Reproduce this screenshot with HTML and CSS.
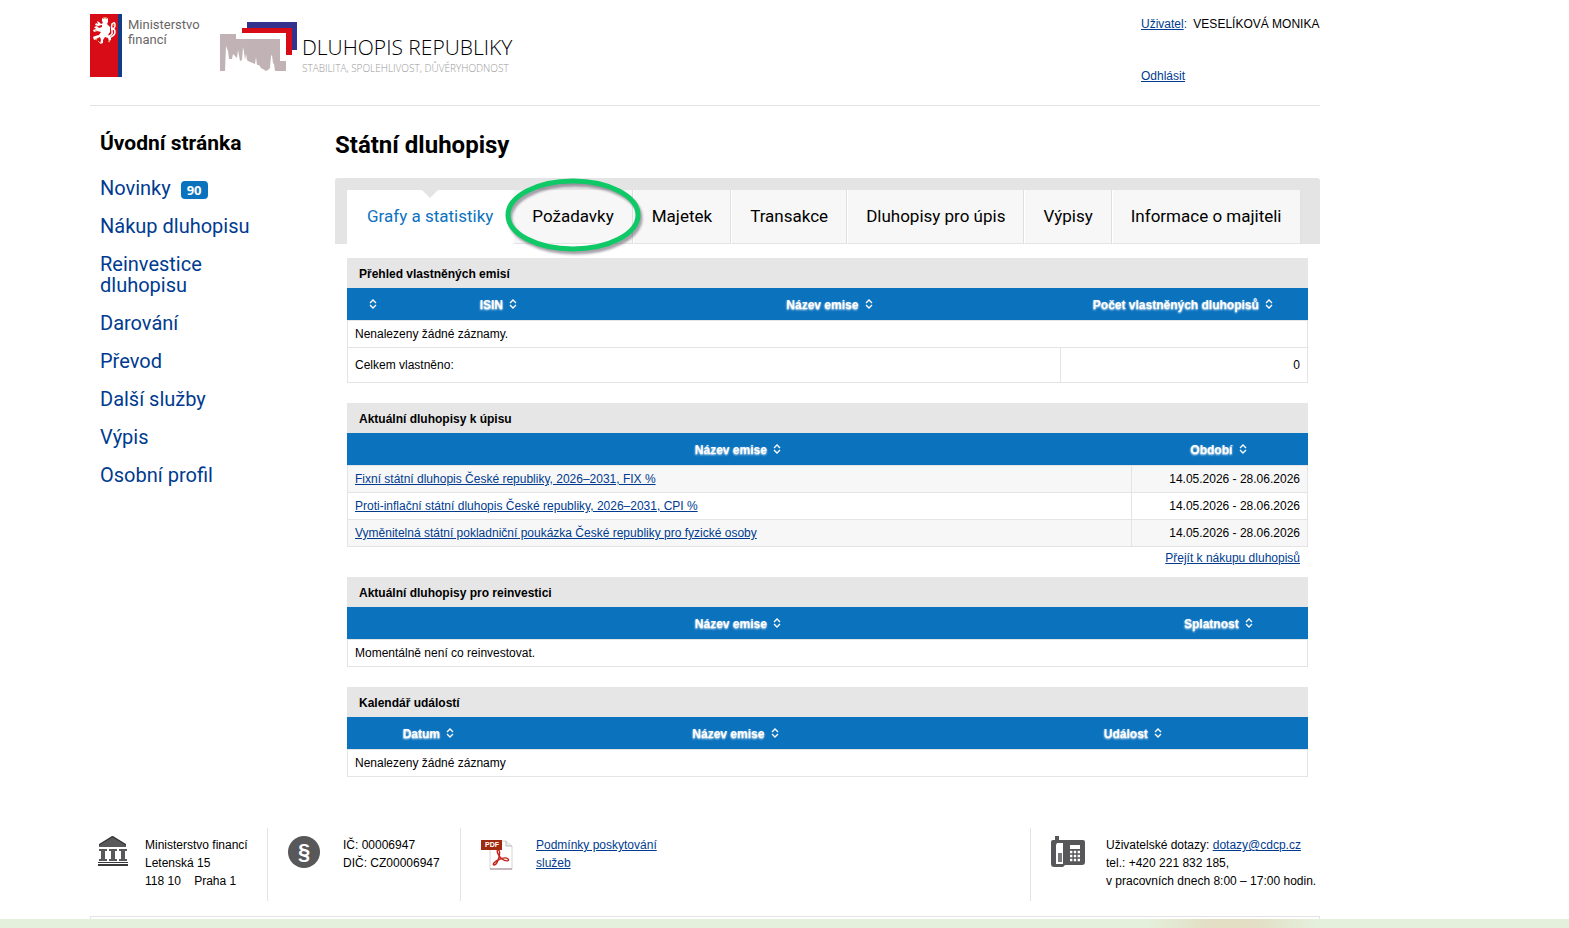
FILE: index.html
```
<!DOCTYPE html>
<html lang="cs">
<head>
    <meta charset="UTF-8">
    <meta name="viewport" content="width=device-width, initial-scale=1.0">
    <title>Státní dluhopisy</title>
    <link rel="stylesheet" href="styles.css">
</head>
<body>

    <svg class="sprite" aria-hidden="true">
        <symbol id="sort" viewBox="0 0 8 10">
            <path d="M1 4 L4 1 L7 4 M1 6 L4 9 L7 6" fill="none" stroke="#fff" stroke-width="1.4"/>
        </symbol>
    </svg>

    <div class="container">
        <header class="header">
            <a class="ministry" href="#">
                <svg width="32" height="63" viewBox="0 0 32 63" aria-hidden="true">
                    <rect width="28" height="63" fill="#d70c17"/>
                    <rect x="28" width="4" height="63" fill="#123c87"/>
                    <path d="M12 4l2 1 1-2 1 2 2-1v4l-1 2 3 3v5l-2 3 3 2v3l-2 1-1-3-3-1-2 3v3l-3 1 1-4-1-3-4 2-2 1-1-3 2-1 4-1 2-3-4-1-3 1-1-2 3-1-2-2 3-1 2 2 3-1v-2l-4 1-3-1 1-2 2 1-1-3 2 1 2 2 2-1-1-2z" fill="#fff"/>
                    <path d="M19 22q4-1 3-5t0-7q3-3 3 1t-3 3q3 1 3 4t-4 5" fill="none" stroke="#fff" stroke-width="1.5"/>
                    <path d="M13 4h4M5 16l2 1M8 27l2 2M18 27l2 1M23 11h2M5 25l2 1" fill="none" stroke="#f0c05a"/>
                </svg>
                <span>Ministerstvo<br>financí</span>
            </a>
            <a class="brand" href="#">
                <svg width="78" height="50" viewBox="0 0 78 50" aria-hidden="true">
                    <path d="M0 12H16V17H60V39H66V49H55L54 42L53 41L52 33L51 34L50 46L48 48L46 49L41 46L39 43L37 43L36 35L35 42L28 39L27 38L26 32L25 38L24 30L23 25L22 38L20 39L18 28L17 36L15 34L13 32L12 37L9 37L8 29L6 24L5 49H0z" fill="#c0b2b5"/>
                    <path d="M27 0h50v28h-5V6H27z" fill="#33338f"/>
                    <path d="M22 6h50v27h-6V11H22z" fill="#d70c17"/>
                </svg>
                <span>
                    <strong>DLUHOPIS REPUBLIKY</strong>
                    <small>STABILITA, SPOLEHLIVOST, DŮVĚRYHODNOST</small>
                </span>
            </a>
            <div class="user">
                <p><a href="#">Uživatel</a><span class="colon">:</span> VESELÍKOVÁ MONIKA</p>
                <p><a href="#">Odhlásit</a></p>
            </div>
        </header>

        <div class="content">
            <nav class="menu">
                <a class="current" href="#">Úvodní stránka</a>
                <a href="#">Novinky <span class="badge">90</span></a>
                <a href="#">Nákup dluhopisu</a>
                <a href="#">Reinvestice<br>dluhopisu</a>
                <a href="#">Darování</a>
                <a href="#">Převod</a>
                <a href="#">Další služby</a>
                <a href="#">Výpis</a>
                <a href="#">Osobní profil</a>
            </nav>

            <main class="main">
                <h1>Státní dluhopisy</h1>

                <nav class="tabs">
                    <a class="tab active" href="#">Grafy a statistiky</a>
                    <a class="tab" href="#">Požadavky
                        <svg class="mark" viewBox="0 0 138 76" aria-hidden="true">
                            <ellipse cx="69" cy="37" rx="65" ry="34"/>
                        </svg>
                    </a>
                    <a class="tab" href="#">Majetek</a>
                    <a class="tab" href="#">Transakce</a>
                    <a class="tab" href="#">Dluhopisy pro úpis</a>
                    <a class="tab" href="#">Výpisy</a>
                    <a class="tab" href="#">Informace o majiteli</a>
                </nav>

                <section class="panel">
                    <h2>Přehled vlastněných emisí</h2>
                    <table>
                        <colgroup><col class="col-icon"><col class="col-isin"><col><col class="col-count"></colgroup>
                        <thead>
                            <tr>
                                <th><svg class="sort"><use href="#sort"/></svg></th>
                                <th>ISIN <svg class="sort"><use href="#sort"/></svg></th>
                                <th>Název emise <svg class="sort"><use href="#sort"/></svg></th>
                                <th>Počet vlastněných dluhopisů <svg class="sort"><use href="#sort"/></svg></th>
                            </tr>
                        </thead>
                        <tbody>
                            <tr><td colspan="4">Nenalezeny žádné záznamy.</td></tr>
                        </tbody>
                        <tfoot>
                            <tr><td colspan="3">Celkem vlastněno:</td><td class="right">0</td></tr>
                        </tfoot>
                    </table>
                </section>

                <section class="panel">
                    <h2>Aktuální dluhopisy k úpisu</h2>
                    <table class="striped">
                        <colgroup><col><col class="col-period"></colgroup>
                        <thead>
                            <tr>
                                <th>Název emise <svg class="sort"><use href="#sort"/></svg></th>
                                <th>Období <svg class="sort"><use href="#sort"/></svg></th>
                            </tr>
                        </thead>
                        <tbody>
                            <tr>
                                <td><a href="#">Fixní státní dluhopis České republiky, 2026–2031, FIX %</a></td>
                                <td class="right">14.05.2026 - 28.06.2026</td>
                            </tr>
                            <tr>
                                <td><a href="#">Proti-inflační státní dluhopis České republiky, 2026–2031, CPI %</a></td>
                                <td class="right">14.05.2026 - 28.06.2026</td>
                            </tr>
                            <tr>
                                <td><a href="#">Vyměnitelná státní pokladniční poukázka České republiky pro fyzické osoby</a></td>
                                <td class="right">14.05.2026 - 28.06.2026</td>
                            </tr>
                        </tbody>
                    </table>
                    <p class="more"><a href="#">Přejít k nákupu dluhopisů</a></p>
                </section>

                <section class="panel">
                    <h2>Aktuální dluhopisy pro reinvestici</h2>
                    <table>
                        <colgroup><col><col class="col-period"></colgroup>
                        <thead>
                            <tr>
                                <th>Název emise <svg class="sort"><use href="#sort"/></svg></th>
                                <th>Splatnost <svg class="sort"><use href="#sort"/></svg></th>
                            </tr>
                        </thead>
                        <tbody>
                            <tr><td colspan="2">Momentálně není co reinvestovat.</td></tr>
                        </tbody>
                    </table>
                </section>

                <section class="panel">
                    <h2>Kalendář událostí</h2>
                    <table>
                        <colgroup><col class="col-date"><col><col class="col-event"></colgroup>
                        <thead>
                            <tr>
                                <th>Datum <svg class="sort"><use href="#sort"/></svg></th>
                                <th>Název emise <svg class="sort"><use href="#sort"/></svg></th>
                                <th>Událost <svg class="sort"><use href="#sort"/></svg></th>
                            </tr>
                        </thead>
                        <tbody>
                            <tr><td colspan="3">Nenalezeny žádné záznamy</td></tr>
                        </tbody>
                    </table>
                </section>
            </main>
        </div>

        <footer class="footer">
            <div class="info address">
                <svg width="30" height="30" viewBox="0 0 30 30" aria-hidden="true">
                    <path d="M14 0h1L28 8v3H1V8z" fill="#58585b"/>
                    <path d="M1 9L14 1h1L28 9" fill="none" stroke="#2f2f32"/>
                    <path d="M1 13h8v2H7v8h2v2H1v-2h2v-8H1zM11 13h8v2h-2v8h2v2h-8v-2h2v-8h-2zM21 13h8v2h-2v8h2v2h-8v-2h2v-8h-2z" fill="#58585b"/>
                    <path d="M0 26h30v1H0zM0 28h30v2H0z" fill="#39393c"/>
                </svg>
                <p>Ministerstvo financí<br>Letenská 15<br>118 10 &nbsp;&nbsp; Praha 1</p>
            </div>
            <div class="info ids">
                <span class="paragraph-sign">§</span>
                <p>IČ: 00006947<br>DIČ: CZ00006947</p>
            </div>
            <div class="info terms">
                <svg width="32" height="34" viewBox="0 0 32 34" aria-hidden="true">
                    <path d="M9 5h16l6 5v23H9z" fill="#fff" stroke="#d6d2d2"/>
                    <path d="M9 33h22" stroke="#a3838f"/>
                    <path d="M25 5v5h6" fill="#eee" stroke="#bbb"/>
                    <path d="M0 4h21v10H0z" fill="#9f2a12"/>
                    <text x="4" y="11" font-size="7">PDF</text>
                    <path d="M17 14c-2 0 0 6 4 9s8 2 6 0-6-1-10 1-6 5-4 5 4-4 5-8 1-7-1-7z" fill="none" stroke="#c5221c" stroke-width="1.4"/>
                </svg>
                <p><a href="#">Podmínky poskytování<br>služeb</a></p>
            </div>
            <div class="info contact">
                <svg width="34" height="31" viewBox="0 0 34 31" aria-hidden="true">
                    <path d="M4 0h4v4h24q2 0 2 2v20q0 3-3 3H14l-2 2H3q-3 0-3-3V6q0-2 2-2h2z" fill="#57575a"/>
                    <path d="M6 7h6v21H5V9z" fill="#fff"/>
                    <path d="M7 17h4v9H7z" fill="#77777a"/>
                    <path d="M19 9h10v4H19z" fill="#fff"/>
                    <path d="M19 16h10M19 20h10M19 24h10" stroke="#fff" stroke-width="2.4" stroke-dasharray="2.4 1.4"/>
                </svg>
                <p>Uživatelské dotazy: <a href="#">dotazy@cdcp.cz</a><br>tel.: +420 221 832 185,<br>v pracovních dnech 8:00 – 17:00 hodin.</p>
            </div>
        </footer>
        <div class="partners"></div>
    </div>

    <div class="bottom-bar"></div>

</body>
</html>
```
FILE: styles.css
```
* {
    margin: 0;
    padding: 0;
    box-sizing: border-box;
}

body {
    min-height: 100vh;
    display: flex;
    flex-direction: column;
    background: #fff;
    color: #000;
    font-family: 'Liberation Sans', Arial, sans-serif;
    font-size: 12px;
    line-height: 18px;
    overflow: hidden;
}

a {
    color: #003b90;
}

.sprite {
    position: absolute;
    width: 0;
    height: 0;
}

.container {
    margin: 0 249px 0 90px;
}

/* header */
.header {
    height: 106px;
    padding-top: 14px;
    display: flex;
    align-items: flex-start;
    border-bottom: 1px solid #e3e3e3;
}

.ministry,
.brand {
    display: flex;
    text-decoration: none;
}

.ministry {
    width: 130px;
    gap: 6px;
    color: #6a6567;
    font-family: Roboto, sans-serif;
    font-size: 13px;
    line-height: 15px;
}

.ministry span {
    padding-top: 3px;
}

.brand {
    gap: 4px;
    padding-top: 8px;
    color: #000;
}

.brand span {
    padding-top: 13px;
}

.brand strong,
.brand small {
    display: block;
    font-family: 'Open Sans', sans-serif;
    font-weight: 300;
    white-space: nowrap;
}

.brand strong {
    font-size: 21px;
    line-height: 24px;
}

.brand small {
    color: #999;
    font-size: 10px;
    line-height: 18px;
}

.user {
    width: 179px;
    margin-left: auto;
    padding-top: 1px;
    white-space: nowrap;
}

.user p {
    margin-bottom: 34px;
}

.colon {
    margin-right: 3px;
    color: #003b90;
}

/* left menu */
.content {
    display: flex;
}

.menu {
    width: 245px;
    padding: 27px 10px 0;
    display: flex;
    flex-direction: column;
    gap: 17px;
}

.menu a {
    color: #003b90;
    font-family: Roboto, sans-serif;
    font-size: 20px;
    line-height: 21px;
    text-decoration: none;
}

.menu .current {
    margin-bottom: 7px;
    color: #000;
    font-size: 21px;
    font-weight: bold;
}

.badge {
    display: inline-block;
    margin-left: 5px;
    padding: 0 6px;
    border-radius: 4px;
    background: #0b72be;
    color: #fff;
    font-family: 'Open Sans', sans-serif;
    font-size: 13px;
    font-weight: bold;
    line-height: 18px;
    vertical-align: middle;
}

/* main column */
.main {
    flex: 1;
    min-width: 0;
}

h1 {
    padding: 24px 0 18px;
    font-family: Roboto, sans-serif;
    font-size: 24px;
    line-height: 30px;
}

.tabs {
    height: 66px;
    padding: 12px 12px 0;
    display: flex;
    background: #e4e4e4;
    border-radius: 3px 3px 0 0;
}

.tab {
    position: relative;
    padding: 0 18px;
    border-right: 1px solid #e0e0e0;
    border-bottom: 1px solid #e4e4e4;
    border-left: 1px solid #fff;
    background: #f7f7f7;
    color: #000;
    font-family: Roboto, sans-serif;
    font-size: 17px;
    line-height: 52px;
    text-decoration: none;
    white-space: nowrap;
}

.tab.active {
    padding: 0 19px;
    background: #fff;
    border-color: #fff;
    color: #0b72be;
}

.tab.active::before {
    content: "";
    position: absolute;
    top: 0;
    left: 50%;
    margin-left: -8px;
    border: 8px solid transparent;
    border-top-color: #e4e4e4;
    border-bottom: 0;
}

.mark {
    position: absolute;
    z-index: 1;
    top: -12px;
    left: -10px;
    width: 138px;
    height: 76px;
    overflow: visible;
    filter: drop-shadow(2px 3px 1px rgba(80, 70, 90, 0.5));
}

.mark ellipse {
    fill: none;
    stroke: #0fc866;
    stroke-width: 5;
}

/* data panels */
.panel {
    margin: 0 12px 20px;
}

.tabs + .panel {
    margin-top: 14px;
}

h2 {
    height: 30px;
    padding: 1px 12px 0;
    background: #e6e6e6;
    font-size: 12px;
    line-height: 30px;
}

table {
    width: 100%;
    border-collapse: separate;
    border-spacing: 0;
    table-layout: fixed;
}

th {
    height: 32px;
    padding: 2px 3px 0 0;
    background: #0b72be;
    color: #fff;
    font-size: 12px;
    text-shadow: 0 1px 2px #fff;
}

.sort {
    width: 8px;
    height: 10px;
    margin-left: 3px;
}

td {
    height: 27px;
    padding: 0 7px;
    border-right: 1px solid #e4e4e4;
    border-bottom: 1px solid #e4e4e4;
}

td:first-child {
    border-left: 1px solid #e4e4e4;
}

tbody tr:first-child td {
    height: 28px;
    border-top: 1px solid #e4e4e4;
}

tfoot td {
    height: 35px;
}

.striped tbody tr:nth-child(odd) {
    background: #f7f7f7;
}

.right {
    text-align: right;
}

.more {
    margin-bottom: -10px;
    padding: 2px 8px 0;
    text-align: right;
}

.col-icon {
    width: 52px;
}

.col-isin {
    width: 202px;
}

.col-count {
    width: 247px;
}

.col-period {
    width: 176px;
}

.col-date {
    width: 166px;
}

.col-event {
    width: 347px;
}

/* footer */
.footer {
    margin-top: 31px;
    display: flex;
}

.info {
    height: 73px;
    padding-top: 8px;
    display: flex;
    border-right: 1px solid #e3e3e3;
}

.address {
    width: 178px;
    padding-left: 8px;
    gap: 17px;
}

.ids {
    width: 193px;
    padding-left: 20px;
    gap: 23px;
}

.terms {
    flex: 1;
    padding-left: 20px;
    gap: 23px;
}

.contact {
    width: 289px;
    padding-left: 20px;
    gap: 21px;
    border-right: 0;
    white-space: nowrap;
}

.info svg {
    flex: none;
}

.info text {
    fill: #fff;
    font-weight: bold;
}

.paragraph-sign {
    width: 32px;
    height: 32px;
    border-radius: 50%;
    background: #58585b;
    color: #fff;
    font-size: 22px;
    font-weight: bold;
    line-height: 32px;
    text-align: center;
}

.partners {
    height: 3px;
    margin-top: 15px;
    border: 1px solid #e3e3e3;
    border-bottom: 0;
}

.bottom-bar {
    flex: 1;
    min-height: 9px;
    background: linear-gradient(90deg, #e4f0dc 73%, #e2dfc4 77%, #e2dfc4 80%, #e4f0dc 84%);
}
```
